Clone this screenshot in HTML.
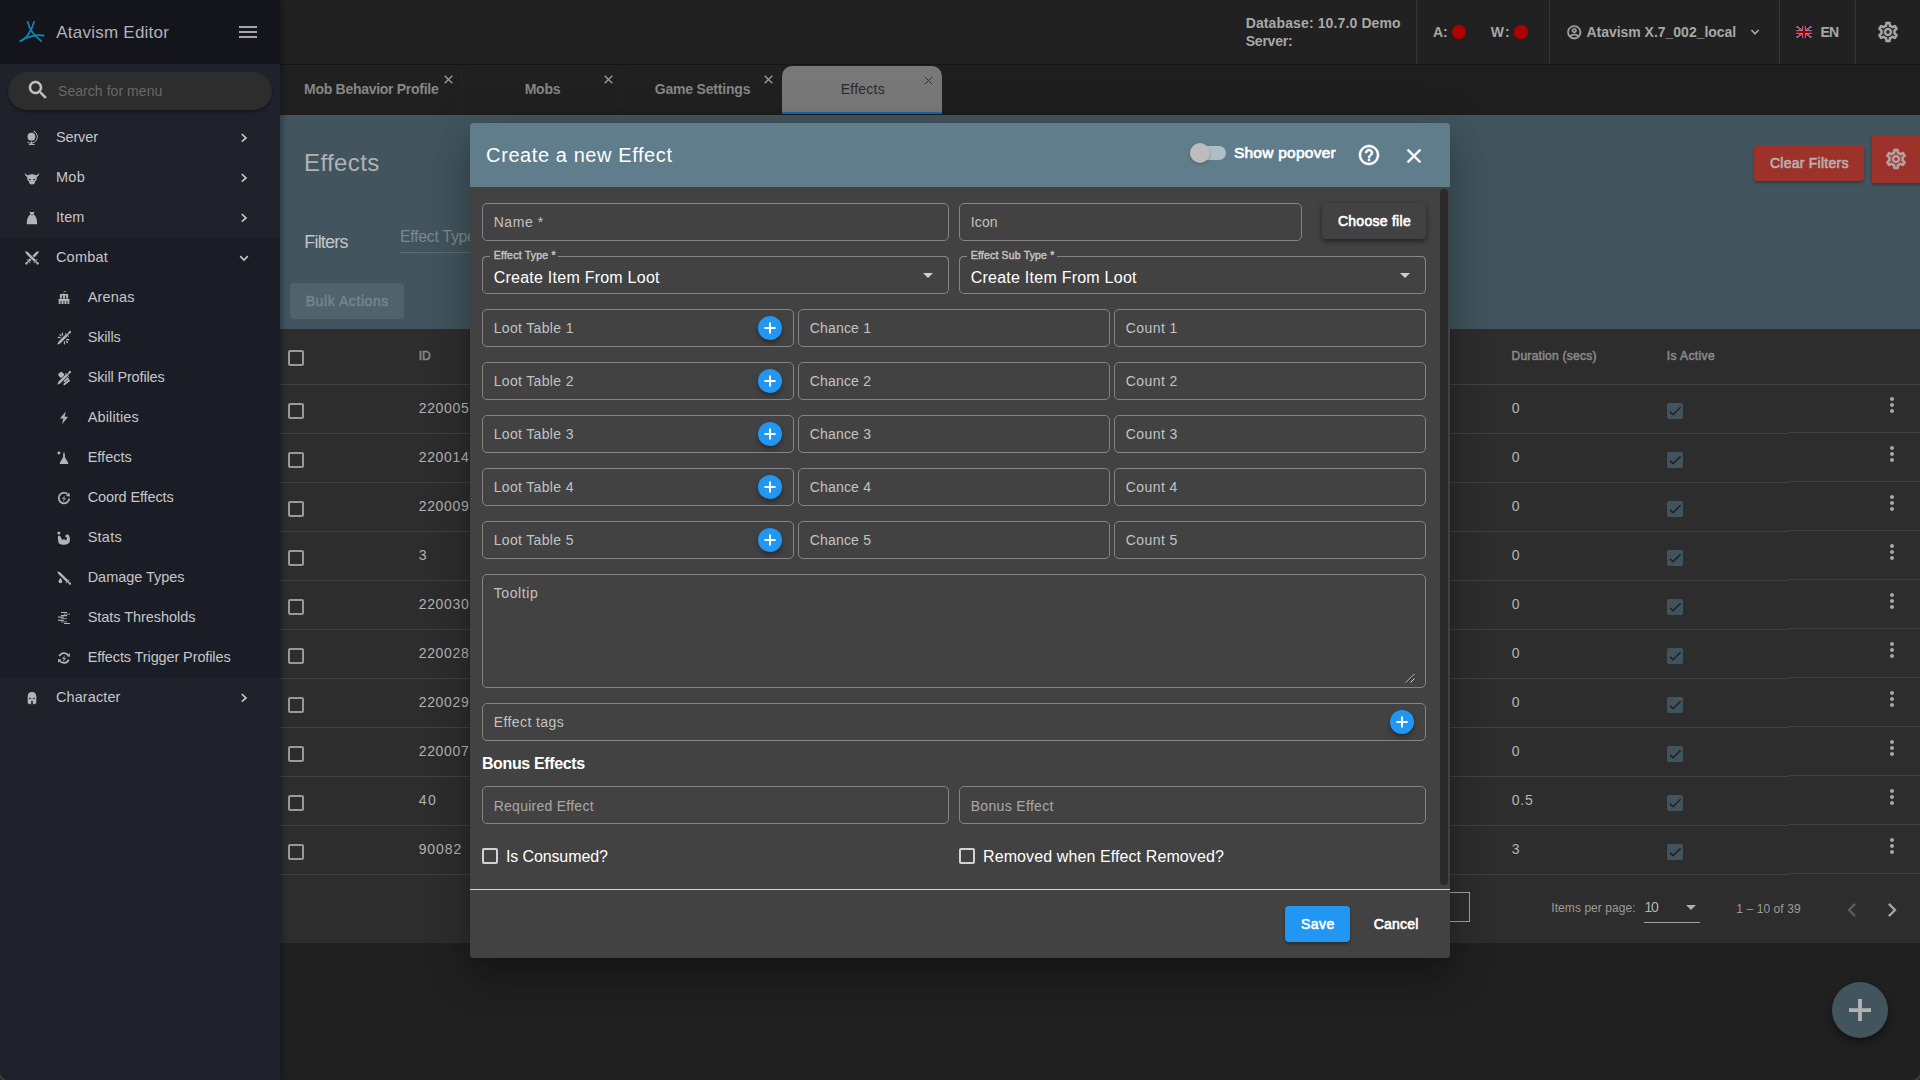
<!DOCTYPE html>
<html lang="en">
<head>
<meta charset="utf-8">
<title>Atavism Editor - Effects</title>
<style>
*{box-sizing:border-box;margin:0;padding:0}
html,body{width:1920px;height:1080px;overflow:hidden;background:#202020;font-family:"Liberation Sans",sans-serif;color:#c6c6c6;font-size:14px}
.abs{position:absolute}
svg{display:block}
i{display:block;font-style:normal}
button{font:inherit;border:0;background:none;color:inherit;display:block}
.t{position:absolute;white-space:nowrap}
/* ---------- sidebar ---------- */
#sidebar{position:absolute;left:0;top:0;width:280px;height:1080px;background:#1f212b;z-index:5;box-shadow:2px 0 6px rgba(0,0,0,.32)}
#brand{position:absolute;left:0;top:0;width:280px;height:64px;background:#14151c}
#brand .burger{position:absolute;left:239px;top:26px;width:18px;height:12px}
#brand .burger i{position:absolute;left:0;width:18px;height:2px;background:#a6a6a6}
#search{position:absolute;left:8px;top:72px;width:264px;height:38px;border-radius:19px;background:#2d2d2d;box-shadow:0 2px 3px rgba(0,0,0,.35)}
#menu{position:absolute;left:0;top:117px;width:280px;list-style:none}
#menu li{position:relative;height:40px}
#menu li.open{background:#1b1d26}
/* ---------- topbar ---------- */
#topbar{position:absolute;left:280px;top:0;width:1640px;height:65px;background:#212121;border-bottom:1px solid #161616}
#topbar .t{color:#a8a8a8}
#topbar .vsep{position:absolute;top:0;width:1px;height:64px;background:#333}
#topbar .dot{position:absolute;top:25px;width:14px;height:14px;border-radius:50%;background:#b10000}
/* ---------- tabs ---------- */
#tabs{position:absolute;left:280px;top:65px;width:1640px;height:50px;background:#1e1e1e}
#tabs .tab{position:absolute;top:1px;width:160px;height:49px;border-radius:10px 10px 0 0;background:#202020;box-shadow:0 0 0 1px #252525}
#tabs .tab.active{background:#787878;box-shadow:none;height:48px}
#tabs .tab .ink{position:absolute;left:0;bottom:0;width:160px;height:2px;background:#1767ad}
/* ---------- page ---------- */
#page{position:absolute;left:280px;top:115px;width:1640px;height:965px}
#pagehead{position:absolute;left:0;top:0;width:1640px;height:214px;background:#42545e}
#pagehead .filterfield{position:absolute;left:120px;top:110px;width:200px;height:28px;border-bottom:1px solid #5c6d76}
#pagehead .bulk{position:absolute;left:10px;top:168px;width:114px;height:36px;border-radius:4px;background:#50626b}
#pagehead .clear{position:absolute;left:1474px;top:30px;width:110px;height:36px;border-radius:4px;background:#9d322b;box-shadow:0 2px 3px rgba(0,0,0,.3)}
#pagehead .cog{position:absolute;left:1592px;top:20px;width:48px;height:48px;background:#9d322b;box-shadow:0 2px 3px rgba(0,0,0,.3)}
#tablecard{position:absolute;left:0;top:214px;width:1640px;height:614px;background:#2d2d2d}
.tr{position:relative;height:49px}
.tr::after{content:"";position:absolute;left:0;bottom:0;width:1509px;height:1px;background:#424242}
.tr.th{height:56px}
.tr.th::after{width:1640px}
.tr .stickyline{position:absolute;left:1509px;right:0;bottom:1px;height:1px;background:#424242}
.cb{position:absolute;width:16px;height:16px;border:2px solid #999;border-radius:2px}
.cbx{position:absolute;width:16px;height:16px;background:#41545e;border-radius:2px}
.pager{position:relative;height:68px}
.pager .gobox{position:absolute;left:1100px;top:17px;width:90px;height:30px;border:1px solid #a5a5a5}
.ppsel{position:absolute;width:56px;height:30px;border-bottom:1px solid #a2a2a2}
.ppsel .arr{position:absolute;left:42px;top:12px;border:5px solid transparent;border-top-color:#b0b0b0;border-bottom:0}
#fab{position:absolute;left:1552px;top:867px;width:56px;height:56px;border-radius:50%;background:#42545e;box-shadow:0 4px 8px rgba(0,0,0,.45)}
#fab svg{margin:16px}
/* ---------- dialog ---------- */
#backdrop{position:absolute;left:0;top:0;width:1920px;height:1080px;z-index:9}
#dialog{position:absolute;left:470px;top:123px;width:980px;height:835px;border-radius:4px;background:#424242;z-index:10;overflow:hidden;box-shadow:0 11px 15px -7px rgba(0,0,0,.2),0 24px 38px 3px rgba(0,0,0,.14),0 9px 46px 8px rgba(0,0,0,.12)}
#dialog .dh{position:absolute;left:0;top:0;width:980px;height:64px;background:#607d8b}
#dialog .db{position:absolute;left:0;top:64px;width:980px;height:702px}
#dialog .df{position:absolute;left:0;top:766px;width:980px;height:69px;border-top:1px solid #d6d6d6}
.toggle{position:absolute;width:36px;height:20px}
.toggle .track{position:absolute;left:0;top:3px;width:36px;height:14px;border-radius:7px;background:#afbec5}
.toggle .thumb{position:absolute;left:0;top:0;width:20px;height:20px;border-radius:50%;background:#bdbdbd;box-shadow:0 1px 3px rgba(0,0,0,.28)}
.ff{position:absolute;border:1px solid #858585;border-radius:5px}
.ff .mini{position:absolute;right:11px;top:6px;width:24px;height:24px;border-radius:50%;background:#2196f3;box-shadow:0 3px 5px rgba(0,0,0,.35)}
.ff .grip{position:absolute;right:10.5px;bottom:4.5px}
.choose{position:absolute;left:852px;top:16px;width:104px;height:36px;border-radius:4px;background:#424242;box-shadow:0 3px 4px rgba(0,0,0,.3),0 1px 6px rgba(0,0,0,.2)}
.sel{position:absolute;height:38px}
.sel .bl{position:absolute;left:0;top:0;width:100%;height:38px;border:1px solid #858585;border-top:0;border-radius:5px}
.sel .bt0{position:absolute;left:3px;top:0;width:5px;height:1px;background:#858585}
.sel .bt{position:absolute;right:3px;top:0;height:1px;background:#858585}
.sel .bl::before{content:"";position:absolute;left:-1px;top:0;width:6px;height:6px;border-top:1px solid #858585;border-left:1px solid #858585;border-radius:5px 0 0 0}
.sel .bl::after{content:"";position:absolute;right:-1px;top:0;width:6px;height:6px;border-top:1px solid #858585;border-right:1px solid #858585;border-radius:0 5px 0 0}
.sel .arr{position:absolute;right:16px;top:17px;border:5px solid transparent;border-top-color:#cfcfcf;border-bottom:0}
.chk{position:absolute;display:block;width:400px;height:16px}
.chk .cbw{position:absolute;left:0;top:0;width:16px;height:16px;border:2px solid #d2d2d2;border-radius:2px}
.sbar{position:absolute;left:970px;top:2px;width:8px;height:696px;border-radius:4px;background:#2a2a2a}
.save{position:absolute;left:815px;top:16px;width:65px;height:36px;border-radius:4px;background:#2196f3;box-shadow:0 2px 3px rgba(0,0,0,.35)}
.cancel{position:absolute;left:888px;top:16px;width:76px;height:36px;border-radius:4px}

.corner{position:absolute;bottom:0;width:7px;height:7px;z-index:20;overflow:hidden}
.corner::after{content:"";position:absolute;width:14px;height:14px;border-radius:50%;box-shadow:0 0 0 1px #4a4a4a,0 0 0 8px #2a2a2a}
.corner.l{left:0}.corner.l::after{left:0;bottom:0}
.corner.r{right:0}.corner.r::after{right:0;bottom:0}

</style>
</head>
<body>
<aside id="sidebar">
<div id="brand">
<svg class="abs" style="left:16px;top:16px" width="48" height="32" viewBox="0 0 48 32"><g fill="none" stroke="#078bbd" stroke-width="1.7" stroke-linecap="round"><path d="M11.7 5.9C13 10.5 15 14.5 16.6 16.6S22 22.5 25.2 25.2"/><path d="M18.1 5.9C17.3 9 16 12.5 12.7 17.8S8 23 4.4 25.2"/><path d="M4.4 25.2C9 22 13 20.6 18.5 19.6S24.5 19.2 27.7 19.6"/></g></svg>
<span id="brandtitle" class="t" style="left:56.3px;top:22.0px;font-size:17px;line-height:21px;color:#b2b2b2;letter-spacing:0.230px;">Atavism Editor</span>
<div class="burger"><i style="top:0"></i><i style="top:5px"></i><i style="top:10px"></i></div>
</div>
<div id="search"><svg class="abs" style="left:17.7px;top:6px" width="24" height="24" viewBox="0 0 24 24" fill="#c4c4c4" stroke="#c4c4c4" stroke-width=".5"><path d="M15.5 14h-.79l-.28-.27C15.41 12.59 16 11.11 16 9.5 16 5.91 13.09 3 9.5 3S3 5.91 3 9.5 5.91 16 9.5 16c1.61 0 3.09-.59 4.23-1.57l.27.28v.79l5 4.99L20.49 19l-4.99-5zm-6 0C7.01 14 5 11.99 5 9.5S7.01 5 9.5 5 14 7.01 14 9.5 11.99 14 9.5 14z"/></svg><span id="searchph" class="t" style="left:50.0px;top:10.0px;font-size:14px;line-height:18px;color:#696969;letter-spacing:0.056px;">Search for menu</span></div>
<ul id="menu">
<li class=""><svg class="abs" style="left:20px;top:8px" width="24" height="24" viewBox="0 0 24 24" fill="#b4b4b4"><circle cx="11.4" cy="11.7" r="3.9"/><path d="M14.2 6.2A6.4 6.4 0 0 1 7.6 17.3" fill="none" stroke="#b4b4b4" stroke-width="1"/><path d="M14 5.6l1 2-1.6-.4z"/><path d="M10.9 16.6h1.3v2.3h2.4v1.1H8.9v-1.1h2z"/></svg><span id="m_server" class="t" style="left:55.9px;top:11.0px;font-size:14.5px;line-height:18px;letter-spacing:-0.121px;">Server</span><svg class="abs" style="left:238px;top:15px" width="12" height="12" viewBox="0 0 12 12"><path d="M3.8 2.1L8 5.9 3.8 9.7" fill="none" stroke="#c4c4c4" stroke-width="1.7"/></svg></li>
<li class=""><svg class="abs" style="left:20px;top:8px" width="24" height="24" viewBox="0 0 24 24" fill="#b4b4b4"><path d="M12 9.3C14 9.3 15.5 9.8 16.6 11C17 12.5 16.9 14.3 16.3 15.3L15 16.6L14.4 19L12 19.6L9.6 19L9 16.6L7.7 15.3C7.1 14.3 7 12.5 7.4 11C8.5 9.8 10 9.3 12 9.3Z"/><path d="M4.9 7.2C5.2 9 6.3 10 8.6 10.3L7.4 11.9C5.4 11.3 4.5 9.5 4.9 7.2Z"/><path d="M19.1 7.2C18.8 9 17.7 10 15.4 10.3L16.6 11.9C18.6 11.3 19.5 9.5 19.1 7.2Z"/><path d="M8.8 13.7l2.1.5-.2 1-1.7-.3z" fill="#1f212b"/><path d="M15.2 13.7l-2.1.5.2 1 1.7-.3z" fill="#1f212b"/><path d="M11.3 16.2h1.4l-.7 1z" fill="#6f7074"/></svg><span id="m_mob" class="t" style="left:55.9px;top:11.0px;font-size:14.5px;line-height:18px;letter-spacing:0.398px;">Mob</span><svg class="abs" style="left:238px;top:15px" width="12" height="12" viewBox="0 0 12 12"><path d="M3.8 2.1L8 5.9 3.8 9.7" fill="none" stroke="#c4c4c4" stroke-width="1.7"/></svg></li>
<li class=""><svg class="abs" style="left:20px;top:8px" width="24" height="24" viewBox="0 0 24 24" fill="#b4b4b4"><path d="M9.6 7h4.8l-1 2.6C16 11 17.2 14 17.2 19.2H6.8C6.8 14 8 11 10.6 9.6Z"/><path d="M11.3 9.3h1.4v1.6h-1.4z" fill="#7a7a7a"/></svg><span id="m_item" class="t" style="left:55.9px;top:11.0px;font-size:14.5px;line-height:18px;letter-spacing:0.104px;">Item</span><svg class="abs" style="left:238px;top:15px" width="12" height="12" viewBox="0 0 12 12"><path d="M3.8 2.1L8 5.9 3.8 9.7" fill="none" stroke="#c4c4c4" stroke-width="1.7"/></svg></li>
<li class="open"><svg class="abs" style="left:20px;top:8px" width="24" height="24" viewBox="0 0 24 24" fill="#b4b4b4"><g transform="translate(19 6) rotate(135.4)"><path d="M0 0L2.8 -1.25L14.2 -1.25L14.2 1.25L2.8 1.25Z"/><path d="M14.2 -2.4h.8v4.8h-.8z"/><path d="M15.0 -.75H16.8V.75H15.0z"/><circle cx="17.7" cy="0" r="1.25"/></g><path d="M1.5 0L2.8 -1.25L14.2 -1.25L14.2 1.25L2.8 1.25Z" fill="none" stroke="#1b1d26" stroke-width="1.2" transform="translate(5 6) rotate(44.6)"/><g transform="translate(5 6) rotate(44.6)"><path d="M0 0L2.8 -1.25L14.2 -1.25L14.2 1.25L2.8 1.25Z"/><path d="M14.2 -2.4h.8v4.8h-.8z"/><path d="M15.0 -.75H16.8V.75H15.0z"/><circle cx="17.7" cy="0" r="1.25"/></g></svg><span id="m_combat" class="t" style="left:55.9px;top:11.0px;font-size:14.5px;line-height:18px;letter-spacing:0.247px;">Combat</span><svg class="abs" style="left:238px;top:15px" width="12" height="12" viewBox="0 0 12 12"><path d="M2.2 4.1L6 8 9.8 4.1" fill="none" stroke="#c4c4c4" stroke-width="1.7"/></svg></li>
<li class="sub open"><svg class="abs" style="left:52px;top:8px" width="24" height="24" viewBox="0 0 24 24" fill="#b4b4b4"><path d="M7.9 9h8.2v4.6H7.9z"/><path d="M5.8 14h12.4l-.9 1v4.1H6.7V15z"/><path d="M9.9 10.6h1.1v3H9.9zM13 10.6h1.1v3H13z" fill="#1b1d26"/><path d="M8 16h2v3.1H8zM11 16h2v3.1h-2zM14 16h2v3.1h-2z" fill="#6e6f73"/><path d="M11.9 5.9l3.2.3-3 .9v2h-.5z" fill="#9a9a9a"/></svg><span id="m_arenas" class="t" style="left:87.7px;top:11.0px;font-size:14.5px;line-height:18px;letter-spacing:0.162px;">Arenas</span></li>
<li class="sub open"><svg class="abs" style="left:52px;top:8px" width="24" height="24" viewBox="0 0 24 24" fill="#b4b4b4"><g transform="translate(5.3 19.7) rotate(-45)"><path d="M0 0L2.8 -1.25L13.4 -1.25L13.4 1.25L2.8 1.25Z"/><path d="M13.4 -2.4h.8v4.8h-.8z"/><path d="M14.200000000000001 -.75H16.8V.75H14.200000000000001z"/><circle cx="17.7" cy="0" r="1.25"/></g><g stroke="#b4b4b4" stroke-linecap="round" stroke-width="1.3"><path d="M10.3 8.2l.3 1.8M7.8 9.6l1.3 1.3M6.2 12.4l2 .2M14.8 14.5l2 .1M14.3 16.3l1.2 1.2M12.4 16.8l.1 2"/></g></svg><span id="m_skills" class="t" style="left:87.7px;top:11.0px;font-size:14.5px;line-height:18px;letter-spacing:-0.166px;">Skills</span></li>
<li class="sub open"><svg class="abs" style="left:52px;top:8px" width="24" height="24" viewBox="0 0 24 24" fill="#b4b4b4"><path d="M1.5 0L2.8 -1.25L13.4 -1.25L13.4 1.25L2.8 1.25Z" fill="none" stroke="#1b1d26" stroke-width="1.2" transform="translate(5.3 19.7) rotate(-45)"/><g transform="translate(5.3 19.7) rotate(-45)"><path d="M0 0L2.8 -1.25L13.4 -1.25L13.4 1.25L2.8 1.25Z"/><path d="M13.4 -2.4h.8v4.8h-.8z"/><path d="M14.200000000000001 -.75H16.8V.75H14.200000000000001z"/><circle cx="17.7" cy="0" r="1.25"/></g><rect x="6.7" y="7.3" width="5" height="5" rx="1.2" transform="rotate(-42 9.2 9.8)"/><g stroke="#b4b4b4" stroke-linecap="round" stroke-width="1.9"><path d="M12.6 16.1l3.2-2.8M12.4 19.3l4.5-3.8"/></g><path d="M15.3 13.2l2.6 2.3-1.2 1.2z"/></svg><span id="m_skillprofiles" class="t" style="left:87.7px;top:11.0px;font-size:14.5px;line-height:18px;letter-spacing:-0.150px;">Skill Profiles</span></li>
<li class="sub open"><svg class="abs" style="left:52px;top:8px" width="24" height="24" viewBox="0 0 24 24" fill="#b4b4b4"><path d="M13.8 6.6L7.9 13.6H11.4L10 19.2L16 11.7H12.6Z"/></svg><span id="m_abilities" class="t" style="left:87.7px;top:11.0px;font-size:14.5px;line-height:18px;letter-spacing:0.131px;">Abilities</span></li>
<li class="sub open"><svg class="abs" style="left:52px;top:8px" width="24" height="24" viewBox="0 0 24 24" fill="#b4b4b4"><path d="M11.1 8.8h1.8v3.4l3.3 5.6a.8.8 0 0 1-.7 1.2h-7a.8.8 0 0 1-.7-1.2l3.3-5.6z"/><path d="M11.1 7.2h1.8v1.4h-1.8z" fill="#77787c"/><circle cx="6.9" cy="8" r="1.45"/></svg><span id="m_effects" class="t" style="left:87.7px;top:11.0px;font-size:14.5px;line-height:18px;letter-spacing:-0.008px;">Effects</span></li>
<li class="sub open"><svg class="abs" style="left:52px;top:8px" width="24" height="24" viewBox="0 0 24 24" fill="#b4b4b4"><path d="M17.3 13.7A5.3 5.3 0 1 1 15.2 8.8" fill="none" stroke="#b4b4b4" stroke-width="1.7"/><path d="M14 10.9l4 .5-.9-3.9z"/><path d="M13.8 6.6L7.9 13.6H11.4L10 19.2L16 11.7H12.6Z" fill="#8e8e90" transform="translate(5.4 6.6) scale(.55)"/></svg><span id="m_coord" class="t" style="left:87.7px;top:11.0px;font-size:14.5px;line-height:18px;letter-spacing:-0.132px;">Coord Effects</span></li>
<li class="sub open"><svg class="abs" style="left:52px;top:8px" width="24" height="24" viewBox="0 0 24 24" fill="#b4b4b4"><path d="M6 11C7 10.6 8.3 11 8.8 12L10 14.8C11 14 12.5 14 13.5 14.8L14.4 15.6L15 12.2C13.6 12.3 13 11.4 13.4 10.4C14.2 9.2 16.4 9.2 17 10.4C18.2 13 18.3 16 17 18C14.5 20.3 9.5 20.3 6.8 18.2C5.9 16 5.8 13 6 11Z"/><circle cx="6.9" cy="7.9" r="1.5"/></svg><span id="m_stats" class="t" style="left:87.7px;top:11.0px;font-size:14.5px;line-height:18px;letter-spacing:0.242px;">Stats</span></li>
<li class="sub open"><svg class="abs" style="left:52px;top:8px" width="24" height="24" viewBox="0 0 24 24" fill="#b4b4b4"><g transform="translate(5.2 6.2) rotate(44.2)"><path d="M0 0L2.8 -1.25L14.2 -1.25L14.2 1.25L2.8 1.25Z"/><path d="M14.2 -2.4h.8v4.8h-.8z"/><path d="M15.0 -.75H16.8V.75H15.0z"/><circle cx="17.7" cy="0" r="1.25"/></g><path d="M8.4 12.9c1 1.4 1.9 2.4 1.9 3.4a1.9 1.9 0 0 1-3.8 0c0-1 .9-2 1.9-3.4z"/></svg><span id="m_damage" class="t" style="left:87.7px;top:11.0px;font-size:14.5px;line-height:18px;letter-spacing:-0.046px;">Damage Types</span></li>
<li class="sub open"><svg class="abs" style="left:52px;top:8px" width="24" height="24" viewBox="0 0 24 24" fill="#b4b4b4"><path d="M9 7h6v1.1H9zM9 10.1h6v1.1H9zM12 18h6v1.1h-6z"/><path d="M6 11.6h5.8v1.2H6zM6 14.8h5.8v1.2H6z" fill="#a9a9aa"/><path d="M12 8.4h6v1.4h-6zM9 13h6v1.3H9zM9 16.2h6v1.4H9z" fill="#77787c"/></svg><span id="m_thresholds" class="t" style="left:87.7px;top:11.0px;font-size:14.5px;line-height:18px;letter-spacing:-0.052px;">Stats Thresholds</span></li>
<li class="sub open"><svg class="abs" style="left:52px;top:8px" width="24" height="24" viewBox="0 0 24 24" fill="#b4b4b4"><path d="M7.3 11.3A5.1 5.1 0 0 1 16.3 10.3" fill="none" stroke="#b4b4b4" stroke-width="1.7"/><path d="M14.6 11.2l3.4.6-.2-3.7z"/><path d="M16.7 14.6A5.1 5.1 0 0 1 7.7 15.6" fill="none" stroke="#b4b4b4" stroke-width="1.7"/><path d="M9.4 14.7l-3.4-.6.2 3.7z"/><path d="M13.8 6.6L7.9 13.6H11.4L10 19.2L16 11.7H12.6Z" fill="#9a9a9c" transform="translate(5.4 6.6) scale(.55)"/></svg><span id="m_trigger" class="t" style="left:87.7px;top:11.0px;font-size:14.5px;line-height:18px;letter-spacing:-0.113px;">Effects Trigger Profiles</span></li>
<li class=""><svg class="abs" style="left:20px;top:8px" width="24" height="24" viewBox="0 0 24 24" fill="#b4b4b4"><path d="M12 6.9C15 6.9 16.3 9 16.3 11.5V17.5C16.3 18.6 15 19.3 12.9 19.3V16.3H11.1V19.3C9 19.3 7.7 18.6 7.7 17.5V11.5C7.7 9 9 6.9 12 6.9Z"/><ellipse cx="9.9" cy="13.4" rx="1" ry=".55" fill="#1f212b"/><ellipse cx="13.9" cy="13.4" rx="1" ry=".55" fill="#1f212b"/><path d="M11.5 13.6h1v2.4h-1z" fill="#8a8a8c"/></svg><span id="m_character" class="t" style="left:55.9px;top:11.0px;font-size:14.5px;line-height:18px;letter-spacing:0.105px;">Character</span><svg class="abs" style="left:238px;top:15px" width="12" height="12" viewBox="0 0 12 12"><path d="M3.8 2.1L8 5.9 3.8 9.7" fill="none" stroke="#c4c4c4" stroke-width="1.7"/></svg></li>
</ul></aside>
<header id="topbar">
<div class="dbinfo"><span id="db1" class="t" style="left:965.7px;top:14.0px;font-size:14px;line-height:18px;font-weight:700;letter-spacing:0.122px;">Database: 10.7.0 Demo</span><span id="db2" class="t" style="left:965.7px;top:32.0px;font-size:14px;line-height:18px;font-weight:700;letter-spacing:-0.214px;">Server:</span></div>
<i class="vsep" style="left:1136px"></i>
<i class="vsep" style="left:1269px"></i>
<i class="vsep" style="left:1499px"></i>
<i class="vsep" style="left:1575px"></i>
<div class="status"><span id="stA" class="t" style="left:1153.1px;top:23.0px;font-size:14px;line-height:18px;font-weight:700;letter-spacing:-0.201px;">A:</span><i class="dot" style="left:1172px"></i><span id="stW" class="t" style="left:1210.7px;top:23.0px;font-size:14px;line-height:18px;font-weight:700;letter-spacing:1.355px;">W:</span><i class="dot" style="left:1234px"></i></div>
<div class="profile"><svg class="abs" style="left:1286px;top:24px" width="16.5" height="16.5" viewBox="0 0 24 24" fill="#a8a8a8" stroke="#a8a8a8" stroke-width=".5"><path d="M12 2C6.48 2 2 6.48 2 12s4.48 10 10 10 10-4.48 10-10S17.52 2 12 2zM7.07 18.28c.43-.9 3.05-1.78 4.93-1.78s4.51.88 4.93 1.78C15.57 19.36 13.86 20 12 20s-3.57-.64-4.93-1.72zm11.29-1.45c-1.43-1.74-4.9-2.33-6.36-2.33s-4.93.59-6.36 2.33C4.62 15.49 4 13.82 4 12c0-4.41 3.59-8 8-8s8 3.59 8 8c0 1.82-.62 3.49-1.64 4.83zM12 6c-1.94 0-3.5 1.56-3.5 3.5S10.06 13 12 13s3.5-1.56 3.5-3.5S13.94 6 12 6zm0 5c-.83 0-1.5-.67-1.5-1.5S11.17 8 12 8s1.5.67 1.5 1.5S12.83 11 12 11z"/></svg><span id="prof" class="t" style="left:1306.4px;top:23.0px;font-size:14px;line-height:18px;font-weight:700;letter-spacing:-0.017px;">Atavism X.7_002_local</span><svg class="abs" style="left:1469px;top:26px" width="12" height="12" viewBox="0 0 12 12"><path d="M2.4 4L6 7.8 9.6 4" fill="none" stroke="#a8a8a8" stroke-width="1.7"/></svg></div>
<div class="lang"><svg class="abs" style="left:1516px;top:26px" width="16" height="12" viewBox="0 0 16 12"><rect width="16" height="12" fill="#02024e"/><path d="M0 0l16 12M16 0L0 12" stroke="#a4a4a4" stroke-width="2"/><path d="M0 0l16 12M16 0L0 12" stroke="#950a0a" stroke-width=".8"/><path d="M8 0v12" stroke="#adadad" stroke-width="4.2"/><path d="M0 6h16" stroke="#adadad" stroke-width="3.6"/><path d="M8 0v12" stroke="#9a0000" stroke-width="2.8"/><path d="M0 6h16" stroke="#9a0000" stroke-width="2.2"/></svg><span id="lang" class="t" style="left:1540.4px;top:23.0px;font-size:14px;line-height:18px;font-weight:700;letter-spacing:-0.673px;">EN</span></div>
<svg class="abs" style="left:1596px;top:20px" width="24" height="24" viewBox="0 0 24 24" fill="#a8a8a8" stroke="#a8a8a8" stroke-width=".55"><path d="M19.43 12.98c.04-.32.07-.64.07-.98 0-.34-.03-.66-.07-.98l2.11-1.65c.19-.15.24-.42.12-.64l-2-3.46c-.09-.16-.26-.25-.44-.25-.06 0-.12.01-.17.03l-2.49 1c-.52-.4-1.08-.73-1.69-.98l-.38-2.65C14.46 2.18 14.25 2 14 2h-4c-.25 0-.46.18-.49.42l-.38 2.65c-.61.25-1.17.59-1.69.98l-2.49-1c-.06-.02-.12-.03-.18-.03-.17 0-.34.09-.43.25l-2 3.46c-.13.22-.07.49.12.64l2.11 1.65c-.04.32-.07.65-.07.98 0 .33.03.66.07.98l-2.11 1.65c-.19.15-.24.42-.12.64l2 3.46c.09.16.26.25.44.25.06 0 .12-.01.17-.03l2.49-1c.52.4 1.08.73 1.69.98l.38 2.65c.03.24.24.42.49.42h4c.25 0 .46-.18.49-.42l.38-2.65c.61-.25 1.17-.59 1.69-.98l2.49 1c.06.02.12.03.18.03.17 0 .34-.09.43-.25l2-3.46c.12-.22.07-.49-.12-.64l-2.11-1.65zm-1.98-1.71c.04.31.05.52.05.73 0 .21-.02.43-.05.73l-.14 1.13.89.7 1.08.84-.7 1.21-1.27-.51-1.04-.42-.9.68c-.43.32-.84.56-1.25.73l-1.06.43-.16 1.13-.2 1.35h-1.4l-.19-1.35-.16-1.13-1.06-.43c-.43-.18-.83-.41-1.23-.71l-.91-.7-1.06.43-1.27.51-.7-1.21 1.08-.84.89-.7-.14-1.13c-.03-.31-.05-.54-.05-.74s.02-.43.05-.73l.14-1.13-.89-.7-1.08-.84.7-1.21 1.27.51 1.04.42.9-.68c.43-.32.84-.56 1.25-.73l1.06-.43.16-1.13.2-1.35h1.39l.19 1.35.16 1.13 1.06.43c.43.18.83.41 1.23.71l.91.7 1.06-.43 1.27-.51.7 1.21-1.07.85-.89.7.14 1.13zM12 8c-2.21 0-4 1.79-4 4s1.79 4 4 4 4-1.79 4-4-1.79-4-4-4zm0 6c-1.1 0-2-.9-2-2s.9-2 2-2 2 .9 2 2-.9 2-2 2z"/></svg>
</header>
<nav id="tabs">
<div class="tab" style="left:1px;width:180px"><span id="tab0" class="t" style="left:23.1px;top:14.0px;font-size:14px;line-height:18px;color:#868686;font-weight:700;letter-spacing:-0.287px;">Mob Behavior Profile</span><svg class="abs" style="left:163px;top:9px" width="9" height="9" viewBox="0 0 9 9"><path d="M.7.7l7.6 7.6M8.3.7L.7 8.3" stroke="#9c9c9c" stroke-width="1.3"/></svg></div>
<div class="tab" style="left:182px;width:160px"><span id="tab1" class="t" style="left:62.7px;top:14.0px;font-size:14px;line-height:18px;color:#868686;font-weight:700;letter-spacing:-0.261px;">Mobs</span><svg class="abs" style="left:142px;top:9px" width="9" height="9" viewBox="0 0 9 9"><path d="M.7.7l7.6 7.6M8.3.7L.7 8.3" stroke="#9c9c9c" stroke-width="1.3"/></svg></div>
<div class="tab" style="left:342px;width:160px"><span id="tab2" class="t" style="left:32.7px;top:14.0px;font-size:14px;line-height:18px;color:#868686;font-weight:700;letter-spacing:-0.188px;">Game Settings</span><svg class="abs" style="left:142px;top:9px" width="9" height="9" viewBox="0 0 9 9"><path d="M.7.7l7.6 7.6M8.3.7L.7 8.3" stroke="#9c9c9c" stroke-width="1.3"/></svg></div>
<div class="tab active" style="left:502px"><span id="tab3" class="t" style="left:58.7px;top:14.0px;font-size:14px;line-height:18px;color:#2a2a2a;letter-spacing:0.239px;">Effects</span><svg class="abs" style="left:142px;top:10px" width="9" height="9" viewBox="0 0 9 9"><path d="M.7.7l7.6 7.6M8.3.7L.7 8.3" stroke="#2e2e2e" stroke-width="1"/></svg><i class="ink"></i></div>
</nav>
<main id="page">
<section id="pagehead">
<span id="ptitle" class="t h1" style="left:24.1px;top:32.5px;font-size:24px;line-height:30px;color:#b0b3b5;letter-spacing:0.357px;">Effects</span>
<span id="filters" class="t" style="left:24.2px;top:116.0px;font-size:18px;line-height:22px;color:#c3c6c8;letter-spacing:-0.773px;">Filters</span>
<div class="filterfield"><span id="ftype" class="t" style="left:-0.1px;top:1.5px;font-size:16px;line-height:20px;color:#7b8a92;letter-spacing:-0.335px;">Effect Type</span></div>
<button class="bulk"><span id="bulk" class="t" style="left:15.7px;top:9.0px;font-size:14px;line-height:18px;color:#72848c;-webkit-text-stroke:0.60px;letter-spacing:0.583px;">Bulk Actions</span></button>
<button class="clear"><span id="clear" class="t" style="left:15.9px;top:9.0px;font-size:14px;line-height:18px;color:#b9b0af;-webkit-text-stroke:0.60px;letter-spacing:0.259px;">Clear Filters</span></button>
<button class="cog"><svg class="abs" style="left:12px;top:12px" width="24" height="24" viewBox="0 0 24 24" fill="#b5a5a3" stroke="#b5a5a3" stroke-width=".6"><path d="M19.43 12.98c.04-.32.07-.64.07-.98 0-.34-.03-.66-.07-.98l2.11-1.65c.19-.15.24-.42.12-.64l-2-3.46c-.09-.16-.26-.25-.44-.25-.06 0-.12.01-.17.03l-2.49 1c-.52-.4-1.08-.73-1.69-.98l-.38-2.65C14.46 2.18 14.25 2 14 2h-4c-.25 0-.46.18-.49.42l-.38 2.65c-.61.25-1.17.59-1.69.98l-2.49-1c-.06-.02-.12-.03-.18-.03-.17 0-.34.09-.43.25l-2 3.46c-.13.22-.07.49.12.64l2.11 1.65c-.04.32-.07.65-.07.98 0 .33.03.66.07.98l-2.11 1.65c-.19.15-.24.42-.12.64l2 3.46c.09.16.26.25.44.25.06 0 .12-.01.17-.03l2.49-1c.52.4 1.08.73 1.69.98l.38 2.65c.03.24.24.42.49.42h4c.25 0 .46-.18.49-.42l.38-2.65c.61-.25 1.17-.59 1.69-.98l2.49 1c.06.02.12.03.18.03.17 0 .34-.09.43-.25l2-3.46c.12-.22.07-.49-.12-.64l-2.11-1.65zm-1.98-1.71c.04.31.05.52.05.73 0 .21-.02.43-.05.73l-.14 1.13.89.7 1.08.84-.7 1.21-1.27-.51-1.04-.42-.9.68c-.43.32-.84.56-1.25.73l-1.06.43-.16 1.13-.2 1.35h-1.4l-.19-1.35-.16-1.13-1.06-.43c-.43-.18-.83-.41-1.23-.71l-.91-.7-1.06.43-1.27.51-.7-1.21 1.08-.84.89-.7-.14-1.13c-.03-.31-.05-.54-.05-.74s.02-.43.05-.73l.14-1.13-.89-.7-1.08-.84.7-1.21 1.27.51 1.04.42.9-.68c.43-.32.84-.56 1.25-.73l1.06-.43.16-1.13.2-1.35h1.39l.19 1.35.16 1.13 1.06.43c.43.18.83.41 1.23.71l.91.7 1.06-.43 1.27-.51.7 1.21-1.07.85-.89.7.14 1.13zM12 8c-2.21 0-4 1.79-4 4s1.79 4 4 4 4-1.79 4-4-1.79-4-4-4zm0 6c-1.1 0-2-.9-2-2s.9-2 2-2 2 .9 2 2-.9 2-2 2z"/></svg></button>
</section>
<section id="tablecard">
<div class="tr th">
<i class="cb" style="left:8px;top:21px"></i>
<span id="h_id" class="t" style="left:138.8px;top:19.5px;font-size:12px;line-height:15px;color:#8a8a8a;-webkit-text-stroke:0.52px;letter-spacing:-0.160px;">ID</span>
<span id="h_dur" class="t" style="left:1231.5px;top:19.5px;font-size:12px;line-height:15px;color:#8a8a8a;-webkit-text-stroke:0.52px;letter-spacing:0.266px;">Duration (secs)</span>
<span id="h_act" class="t" style="left:1386.8px;top:19.5px;font-size:12px;line-height:15px;color:#8a8a8a;-webkit-text-stroke:0.52px;letter-spacing:0.394px;">Is Active</span>
</div>
<div class="tr">
<i class="cb" style="left:8px;top:18px"></i>
<span id="id0" class="t" style="left:138.7px;top:14.0px;font-size:14px;line-height:18px;color:#b4b4b4;letter-spacing:0.652px;">220005</span>
<span id="du0" class="t" style="left:1231.7px;top:14.0px;font-size:14px;line-height:18px;color:#b4b4b4;">0</span>
<i class="cbx" style="left:1387px;top:18px"><svg width="16" height="16" viewBox="0 0 16 16"><path d="M3 8.7l3.1 3 7.5-7.5" fill="none" stroke="#1d2124" stroke-width="1.6"/></svg></i>
<svg class="abs" style="left:1600px;top:8.399999999999977px" width="24" height="24" viewBox="0 0 24 24" fill="#a8a8a8" ><path d="M12 8c1.1 0 2-.9 2-2s-.9-2-2-2-2 .9-2 2 .9 2 2 2zm0 2c-1.1 0-2 .9-2 2s.9 2 2 2 2-.9 2-2-.9-2-2-2zm0 6c-1.1 0-2 .9-2 2s.9 2 2 2 2-.9 2-2-.9-2-2-2z"/></svg>
<i class="stickyline"></i></div>
<div class="tr">
<i class="cb" style="left:8px;top:18px"></i>
<span id="id1" class="t" style="left:138.7px;top:14.0px;font-size:14px;line-height:18px;color:#b4b4b4;letter-spacing:0.652px;">220014</span>
<span id="du1" class="t" style="left:1231.7px;top:14.0px;font-size:14px;line-height:18px;color:#b4b4b4;">0</span>
<i class="cbx" style="left:1387px;top:18px"><svg width="16" height="16" viewBox="0 0 16 16"><path d="M3 8.7l3.1 3 7.5-7.5" fill="none" stroke="#1d2124" stroke-width="1.6"/></svg></i>
<svg class="abs" style="left:1600px;top:8.399999999999977px" width="24" height="24" viewBox="0 0 24 24" fill="#a8a8a8" ><path d="M12 8c1.1 0 2-.9 2-2s-.9-2-2-2-2 .9-2 2 .9 2 2 2zm0 2c-1.1 0-2 .9-2 2s.9 2 2 2 2-.9 2-2-.9-2-2-2zm0 6c-1.1 0-2 .9-2 2s.9 2 2 2 2-.9 2-2-.9-2-2-2z"/></svg>
<i class="stickyline"></i></div>
<div class="tr">
<i class="cb" style="left:8px;top:18px"></i>
<span id="id2" class="t" style="left:138.7px;top:14.0px;font-size:14px;line-height:18px;color:#b4b4b4;letter-spacing:0.652px;">220009</span>
<span id="du2" class="t" style="left:1231.7px;top:14.0px;font-size:14px;line-height:18px;color:#b4b4b4;">0</span>
<i class="cbx" style="left:1387px;top:18px"><svg width="16" height="16" viewBox="0 0 16 16"><path d="M3 8.7l3.1 3 7.5-7.5" fill="none" stroke="#1d2124" stroke-width="1.6"/></svg></i>
<svg class="abs" style="left:1600px;top:8.399999999999977px" width="24" height="24" viewBox="0 0 24 24" fill="#a8a8a8" ><path d="M12 8c1.1 0 2-.9 2-2s-.9-2-2-2-2 .9-2 2 .9 2 2 2zm0 2c-1.1 0-2 .9-2 2s.9 2 2 2 2-.9 2-2-.9-2-2-2zm0 6c-1.1 0-2 .9-2 2s.9 2 2 2 2-.9 2-2-.9-2-2-2z"/></svg>
<i class="stickyline"></i></div>
<div class="tr">
<i class="cb" style="left:8px;top:18px"></i>
<span id="id3" class="t" style="left:138.7px;top:14.0px;font-size:14px;line-height:18px;color:#b4b4b4;">3</span>
<span id="du3" class="t" style="left:1231.7px;top:14.0px;font-size:14px;line-height:18px;color:#b4b4b4;">0</span>
<i class="cbx" style="left:1387px;top:18px"><svg width="16" height="16" viewBox="0 0 16 16"><path d="M3 8.7l3.1 3 7.5-7.5" fill="none" stroke="#1d2124" stroke-width="1.6"/></svg></i>
<svg class="abs" style="left:1600px;top:8.399999999999977px" width="24" height="24" viewBox="0 0 24 24" fill="#a8a8a8" ><path d="M12 8c1.1 0 2-.9 2-2s-.9-2-2-2-2 .9-2 2 .9 2 2 2zm0 2c-1.1 0-2 .9-2 2s.9 2 2 2 2-.9 2-2-.9-2-2-2zm0 6c-1.1 0-2 .9-2 2s.9 2 2 2 2-.9 2-2-.9-2-2-2z"/></svg>
<i class="stickyline"></i></div>
<div class="tr">
<i class="cb" style="left:8px;top:18px"></i>
<span id="id4" class="t" style="left:138.7px;top:14.0px;font-size:14px;line-height:18px;color:#b4b4b4;letter-spacing:0.652px;">220030</span>
<span id="du4" class="t" style="left:1231.7px;top:14.0px;font-size:14px;line-height:18px;color:#b4b4b4;">0</span>
<i class="cbx" style="left:1387px;top:18px"><svg width="16" height="16" viewBox="0 0 16 16"><path d="M3 8.7l3.1 3 7.5-7.5" fill="none" stroke="#1d2124" stroke-width="1.6"/></svg></i>
<svg class="abs" style="left:1600px;top:8.399999999999977px" width="24" height="24" viewBox="0 0 24 24" fill="#a8a8a8" ><path d="M12 8c1.1 0 2-.9 2-2s-.9-2-2-2-2 .9-2 2 .9 2 2 2zm0 2c-1.1 0-2 .9-2 2s.9 2 2 2 2-.9 2-2-.9-2-2-2zm0 6c-1.1 0-2 .9-2 2s.9 2 2 2 2-.9 2-2-.9-2-2-2z"/></svg>
<i class="stickyline"></i></div>
<div class="tr">
<i class="cb" style="left:8px;top:18px"></i>
<span id="id5" class="t" style="left:138.7px;top:14.0px;font-size:14px;line-height:18px;color:#b4b4b4;letter-spacing:0.652px;">220028</span>
<span id="du5" class="t" style="left:1231.7px;top:14.0px;font-size:14px;line-height:18px;color:#b4b4b4;">0</span>
<i class="cbx" style="left:1387px;top:18px"><svg width="16" height="16" viewBox="0 0 16 16"><path d="M3 8.7l3.1 3 7.5-7.5" fill="none" stroke="#1d2124" stroke-width="1.6"/></svg></i>
<svg class="abs" style="left:1600px;top:8.399999999999977px" width="24" height="24" viewBox="0 0 24 24" fill="#a8a8a8" ><path d="M12 8c1.1 0 2-.9 2-2s-.9-2-2-2-2 .9-2 2 .9 2 2 2zm0 2c-1.1 0-2 .9-2 2s.9 2 2 2 2-.9 2-2-.9-2-2-2zm0 6c-1.1 0-2 .9-2 2s.9 2 2 2 2-.9 2-2-.9-2-2-2z"/></svg>
<i class="stickyline"></i></div>
<div class="tr">
<i class="cb" style="left:8px;top:18px"></i>
<span id="id6" class="t" style="left:138.7px;top:14.0px;font-size:14px;line-height:18px;color:#b4b4b4;letter-spacing:0.652px;">220029</span>
<span id="du6" class="t" style="left:1231.7px;top:14.0px;font-size:14px;line-height:18px;color:#b4b4b4;">0</span>
<i class="cbx" style="left:1387px;top:18px"><svg width="16" height="16" viewBox="0 0 16 16"><path d="M3 8.7l3.1 3 7.5-7.5" fill="none" stroke="#1d2124" stroke-width="1.6"/></svg></i>
<svg class="abs" style="left:1600px;top:8.399999999999977px" width="24" height="24" viewBox="0 0 24 24" fill="#a8a8a8" ><path d="M12 8c1.1 0 2-.9 2-2s-.9-2-2-2-2 .9-2 2 .9 2 2 2zm0 2c-1.1 0-2 .9-2 2s.9 2 2 2 2-.9 2-2-.9-2-2-2zm0 6c-1.1 0-2 .9-2 2s.9 2 2 2 2-.9 2-2-.9-2-2-2z"/></svg>
<i class="stickyline"></i></div>
<div class="tr">
<i class="cb" style="left:8px;top:18px"></i>
<span id="id7" class="t" style="left:138.7px;top:14.0px;font-size:14px;line-height:18px;color:#b4b4b4;letter-spacing:0.652px;">220007</span>
<span id="du7" class="t" style="left:1231.7px;top:14.0px;font-size:14px;line-height:18px;color:#b4b4b4;">0</span>
<i class="cbx" style="left:1387px;top:18px"><svg width="16" height="16" viewBox="0 0 16 16"><path d="M3 8.7l3.1 3 7.5-7.5" fill="none" stroke="#1d2124" stroke-width="1.6"/></svg></i>
<svg class="abs" style="left:1600px;top:8.399999999999977px" width="24" height="24" viewBox="0 0 24 24" fill="#a8a8a8" ><path d="M12 8c1.1 0 2-.9 2-2s-.9-2-2-2-2 .9-2 2 .9 2 2 2zm0 2c-1.1 0-2 .9-2 2s.9 2 2 2 2-.9 2-2-.9-2-2-2zm0 6c-1.1 0-2 .9-2 2s.9 2 2 2 2-.9 2-2-.9-2-2-2z"/></svg>
<i class="stickyline"></i></div>
<div class="tr">
<i class="cb" style="left:8px;top:18px"></i>
<span id="id8" class="t" style="left:138.7px;top:14.0px;font-size:14px;line-height:18px;color:#b4b4b4;letter-spacing:1.402px;">40</span>
<span id="du8" class="t" style="left:1231.7px;top:14.0px;font-size:14px;line-height:18px;color:#b4b4b4;letter-spacing:0.756px;">0.5</span>
<i class="cbx" style="left:1387px;top:18px"><svg width="16" height="16" viewBox="0 0 16 16"><path d="M3 8.7l3.1 3 7.5-7.5" fill="none" stroke="#1d2124" stroke-width="1.6"/></svg></i>
<svg class="abs" style="left:1600px;top:8.399999999999977px" width="24" height="24" viewBox="0 0 24 24" fill="#a8a8a8" ><path d="M12 8c1.1 0 2-.9 2-2s-.9-2-2-2-2 .9-2 2 .9 2 2 2zm0 2c-1.1 0-2 .9-2 2s.9 2 2 2 2-.9 2-2-.9-2-2-2zm0 6c-1.1 0-2 .9-2 2s.9 2 2 2 2-.9 2-2-.9-2-2-2z"/></svg>
<i class="stickyline"></i></div>
<div class="tr">
<i class="cb" style="left:8px;top:18px"></i>
<span id="id9" class="t" style="left:138.7px;top:14.0px;font-size:14px;line-height:18px;color:#b4b4b4;letter-spacing:0.886px;">90082</span>
<span id="du9" class="t" style="left:1231.7px;top:14.0px;font-size:14px;line-height:18px;color:#b4b4b4;">3</span>
<i class="cbx" style="left:1387px;top:18px"><svg width="16" height="16" viewBox="0 0 16 16"><path d="M3 8.7l3.1 3 7.5-7.5" fill="none" stroke="#1d2124" stroke-width="1.6"/></svg></i>
<svg class="abs" style="left:1600px;top:8.399999999999977px" width="24" height="24" viewBox="0 0 24 24" fill="#a8a8a8" ><path d="M12 8c1.1 0 2-.9 2-2s-.9-2-2-2-2 .9-2 2 .9 2 2 2zm0 2c-1.1 0-2 .9-2 2s.9 2 2 2 2-.9 2-2-.9-2-2-2zm0 6c-1.1 0-2 .9-2 2s.9 2 2 2 2-.9 2-2-.9-2-2-2z"/></svg>
<i class="stickyline"></i></div>
<div class="pager">
<i class="gobox"></i>
<span id="ipp" class="t" style="left:1271.3px;top:25.5px;font-size:12px;line-height:15px;color:#9b9b9b;letter-spacing:0.068px;">Items per page:</span>
<div class="ppsel" style="left:1364px;top:18px"><span id="pp10" class="t" style="left:0.5px;top:5.0px;font-size:14px;line-height:18px;color:#b4b4b4;letter-spacing:-1.200px;">10</span><i class="arr"></i></div>
<span id="range" class="t" style="left:1456.3px;top:26.5px;font-size:12px;line-height:15px;color:#9b9b9b;letter-spacing:0.086px;">1 – 10 of 39</span>
<svg class="abs" style="left:1558px;top:21px" width="28" height="28" viewBox="0 0 24 24" fill="#5c5c5c" ><path d="M15.41 7.41L14 6l-6 6 6 6 1.41-1.41L10.83 12z"/></svg>
<svg class="abs" style="left:1597.5px;top:21px" width="28" height="28" viewBox="0 0 24 24" fill="#a3a3a3" ><path d="M10 6L8.59 7.41 13.17 12l-4.58 4.59L10 18l6-6z"/></svg>
</div>
</section>
<button id="fab"><svg width="24" height="24" viewBox="0 0 24 24"><path d="M1 10.2h22v3.7H1z M10.1 1h3.8v22h-3.8z" fill="#b3b3b3"/></svg></button>
</main>
<div id="backdrop"></div>
<i class="corner l"></i><i class="corner r"></i>
<div id="dialog" role="dialog">
<div class="dh">
<span id="dtitle" class="t" style="left:16.1px;top:19.5px;font-size:20px;line-height:25px;color:#fff;letter-spacing:0.589px;">Create a new Effect</span>
<div class="toggle" style="left:720px;top:20px"><i class="track"></i><i class="thumb"></i></div>
<span id="showpop" class="t" style="left:763.9px;top:20.0px;font-size:15.5px;line-height:19px;color:#fff;-webkit-text-stroke:0.67px;letter-spacing:0.254px;">Show popover</span>
<svg class="abs" style="left:887px;top:20.30000000000001px" width="24" height="24" viewBox="0 0 24 24" fill="#fff" stroke="#fff" stroke-width=".55"><path d="M11 18h2v-2h-2v2zm1-16C6.48 2 2 6.48 2 12s4.48 10 10 10 10-4.48 10-10S17.52 2 12 2zm0 18c-4.41 0-8-3.59-8-8s3.59-8 8-8 8 3.59 8 8-3.59 8-8 8zm0-14c-2.21 0-4 1.79-4 4h2c0-1.1.9-2 2-2s2 .9 2 2c0 2-3 1.75-3 5h2c0-2.25 3-2.5 3-5 0-2.21-1.79-4-4-4z"/></svg>
<svg class="abs" style="left:932px;top:20.80000000000001px" width="24" height="24" viewBox="0 0 24 24" fill="#fff" stroke="#fff" stroke-width=".4"><path d="M19 6.41L17.59 5 12 10.59 6.41 5 5 6.41 10.59 12 5 17.59 6.41 19 12 13.41 17.59 19 19 17.59 13.41 12z"/></svg>
</div>
<div class="db">
<div class="ff" style="left:12px;top:16px;width:467px;height:38px"><span id="f_name" class="t" style="left:10.7px;top:9.0px;font-size:14px;line-height:18px;color:#c2c2c2;letter-spacing:0.558px;">Name *</span></div>
<div class="ff" style="left:489px;top:16px;width:343px;height:38px"><span id="f_icon" class="t" style="left:10.7px;top:9.0px;font-size:14px;line-height:18px;color:#c2c2c2;letter-spacing:0.170px;">Icon</span></div>
<button class="choose"><span id="choose" class="t" style="left:15.9px;top:9.0px;font-size:14px;line-height:18px;color:#fff;-webkit-text-stroke:0.60px;letter-spacing:0.273px;">Choose file</span></button>
<div class="sel" style="left:12px;top:69px;width:467px"><i class="bl"></i><i class="bt" style="left:76px"></i><i class="bt0"></i><span id="s1l" class="t" style="left:11.8px;top:-7.5px;font-size:10.5px;line-height:13px;color:#c2c2c2;-webkit-text-stroke:0.45px;letter-spacing:0.223px;">Effect Type *</span><span id="s1v" class="t" style="left:11.7px;top:11.5px;font-size:16px;line-height:20px;color:#fff;letter-spacing:0.243px;">Create Item From Loot</span><i class="arr"></i></div>
<div class="sel" style="left:489px;top:69px;width:467px"><i class="bl"></i><i class="bt" style="left:98px"></i><i class="bt0"></i><span id="s2l" class="t" style="left:11.8px;top:-7.5px;font-size:10.5px;line-height:13px;color:#c2c2c2;-webkit-text-stroke:0.45px;letter-spacing:0.171px;">Effect Sub Type *</span><span id="s2v" class="t" style="left:11.7px;top:11.5px;font-size:16px;line-height:20px;color:#fff;letter-spacing:0.243px;">Create Item From Loot</span><i class="arr"></i></div>
<div class="ff" style="left:12px;top:122px;width:312px;height:38px"><span id="lt0" class="t" style="left:10.7px;top:9.0px;font-size:14px;line-height:18px;color:#c2c2c2;letter-spacing:0.341px;">Loot Table 1</span><button class="mini"><svg width="24" height="24" viewBox="0 0 24 24"><path d="M6.4 11h11.2v2H6.4zM11 6.4h2v11.2h-2z" fill="#fff"/></svg></button></div>
<div class="ff" style="left:328px;top:122px;width:312px;height:38px"><span id="ch0" class="t" style="left:10.7px;top:9.0px;font-size:14px;line-height:18px;color:#c2c2c2;letter-spacing:0.192px;">Chance 1</span></div>
<div class="ff" style="left:644px;top:122px;width:312px;height:38px"><span id="co0" class="t" style="left:10.7px;top:9.0px;font-size:14px;line-height:18px;color:#c2c2c2;letter-spacing:0.439px;">Count 1</span></div>
<div class="ff" style="left:12px;top:175px;width:312px;height:38px"><span id="lt1" class="t" style="left:10.7px;top:9.0px;font-size:14px;line-height:18px;color:#c2c2c2;letter-spacing:0.341px;">Loot Table 2</span><button class="mini"><svg width="24" height="24" viewBox="0 0 24 24"><path d="M6.4 11h11.2v2H6.4zM11 6.4h2v11.2h-2z" fill="#fff"/></svg></button></div>
<div class="ff" style="left:328px;top:175px;width:312px;height:38px"><span id="ch1" class="t" style="left:10.7px;top:9.0px;font-size:14px;line-height:18px;color:#c2c2c2;letter-spacing:0.192px;">Chance 2</span></div>
<div class="ff" style="left:644px;top:175px;width:312px;height:38px"><span id="co1" class="t" style="left:10.7px;top:9.0px;font-size:14px;line-height:18px;color:#c2c2c2;letter-spacing:0.439px;">Count 2</span></div>
<div class="ff" style="left:12px;top:228px;width:312px;height:38px"><span id="lt2" class="t" style="left:10.7px;top:9.0px;font-size:14px;line-height:18px;color:#c2c2c2;letter-spacing:0.341px;">Loot Table 3</span><button class="mini"><svg width="24" height="24" viewBox="0 0 24 24"><path d="M6.4 11h11.2v2H6.4zM11 6.4h2v11.2h-2z" fill="#fff"/></svg></button></div>
<div class="ff" style="left:328px;top:228px;width:312px;height:38px"><span id="ch2" class="t" style="left:10.7px;top:9.0px;font-size:14px;line-height:18px;color:#c2c2c2;letter-spacing:0.192px;">Chance 3</span></div>
<div class="ff" style="left:644px;top:228px;width:312px;height:38px"><span id="co2" class="t" style="left:10.7px;top:9.0px;font-size:14px;line-height:18px;color:#c2c2c2;letter-spacing:0.439px;">Count 3</span></div>
<div class="ff" style="left:12px;top:281px;width:312px;height:38px"><span id="lt3" class="t" style="left:10.7px;top:9.0px;font-size:14px;line-height:18px;color:#c2c2c2;letter-spacing:0.341px;">Loot Table 4</span><button class="mini"><svg width="24" height="24" viewBox="0 0 24 24"><path d="M6.4 11h11.2v2H6.4zM11 6.4h2v11.2h-2z" fill="#fff"/></svg></button></div>
<div class="ff" style="left:328px;top:281px;width:312px;height:38px"><span id="ch3" class="t" style="left:10.7px;top:9.0px;font-size:14px;line-height:18px;color:#c2c2c2;letter-spacing:0.192px;">Chance 4</span></div>
<div class="ff" style="left:644px;top:281px;width:312px;height:38px"><span id="co3" class="t" style="left:10.7px;top:9.0px;font-size:14px;line-height:18px;color:#c2c2c2;letter-spacing:0.439px;">Count 4</span></div>
<div class="ff" style="left:12px;top:334px;width:312px;height:38px"><span id="lt4" class="t" style="left:10.7px;top:9.0px;font-size:14px;line-height:18px;color:#c2c2c2;letter-spacing:0.341px;">Loot Table 5</span><button class="mini"><svg width="24" height="24" viewBox="0 0 24 24"><path d="M6.4 11h11.2v2H6.4zM11 6.4h2v11.2h-2z" fill="#fff"/></svg></button></div>
<div class="ff" style="left:328px;top:334px;width:312px;height:38px"><span id="ch4" class="t" style="left:10.7px;top:9.0px;font-size:14px;line-height:18px;color:#c2c2c2;letter-spacing:0.192px;">Chance 5</span></div>
<div class="ff" style="left:644px;top:334px;width:312px;height:38px"><span id="co4" class="t" style="left:10.7px;top:9.0px;font-size:14px;line-height:18px;color:#c2c2c2;letter-spacing:0.439px;">Count 5</span></div>
<div class="ff" style="left:12px;top:387px;width:944px;height:114px"><span id="f_tip" class="t" style="left:10.7px;top:9.0px;font-size:14px;line-height:18px;color:#c2c2c2;letter-spacing:0.585px;">Tooltip</span><svg class="grip" width="10" height="10" viewBox="0 0 10 10"><path d="M9.5 1L1 9.5M9.5 5.5L5.5 9.5" stroke="#d8d8d8" stroke-width="1"/><path d="M9.5 2.2L2.2 9.5" stroke="#222" stroke-width=".8"/></svg></div>
<div class="ff" style="left:12px;top:516px;width:944px;height:38px"><span id="f_tags" class="t" style="left:10.7px;top:9.0px;font-size:14px;line-height:18px;color:#c2c2c2;letter-spacing:0.417px;">Effect tags</span><button class="mini"><svg width="24" height="24" viewBox="0 0 24 24"><path d="M6.4 11h11.2v2H6.4zM11 6.4h2v11.2h-2z" fill="#fff"/></svg></button></div>
<span id="bonush" class="t" style="left:11.9px;top:566.5px;font-size:16px;line-height:20px;color:#fff;font-weight:700;letter-spacing:-0.359px;">Bonus Effects</span>
<div class="ff" style="left:12px;top:599px;width:467px;height:38px"><span id="f_req" class="t" style="left:10.7px;top:10.0px;font-size:14px;line-height:18px;color:#a9a9a9;letter-spacing:0.259px;">Required Effect</span></div>
<div class="ff" style="left:489px;top:599px;width:467px;height:38px"><span id="f_bon" class="t" style="left:10.7px;top:10.0px;font-size:14px;line-height:18px;color:#a9a9a9;letter-spacing:0.331px;">Bonus Effect</span></div>
<label class="chk" style="left:12px;top:661px"><i class="cbw"></i><span id="c_cons" class="t" style="left:23.9px;top:-1.5px;font-size:16px;line-height:20px;color:#fff;letter-spacing:-0.109px;">Is Consumed?</span></label>
<label class="chk" style="left:489px;top:661px"><i class="cbw"></i><span id="c_rem" class="t" style="left:24.0px;top:-1.5px;font-size:16px;line-height:20px;color:#fff;letter-spacing:0.102px;">Removed when Effect Removed?</span></label>
<i class="sbar"></i>
</div>
<div class="df">
<button class="save"><span id="save" class="t" style="left:16.1px;top:9.0px;font-size:14px;line-height:18px;color:#fff;-webkit-text-stroke:0.60px;letter-spacing:0.386px;">Save</span></button>
<button class="cancel"><span id="cancel" class="t" style="left:15.7px;top:9.0px;font-size:14px;line-height:18px;color:#fff;-webkit-text-stroke:0.60px;letter-spacing:0.237px;">Cancel</span></button>
</div>
</div>
</body>
</html>
